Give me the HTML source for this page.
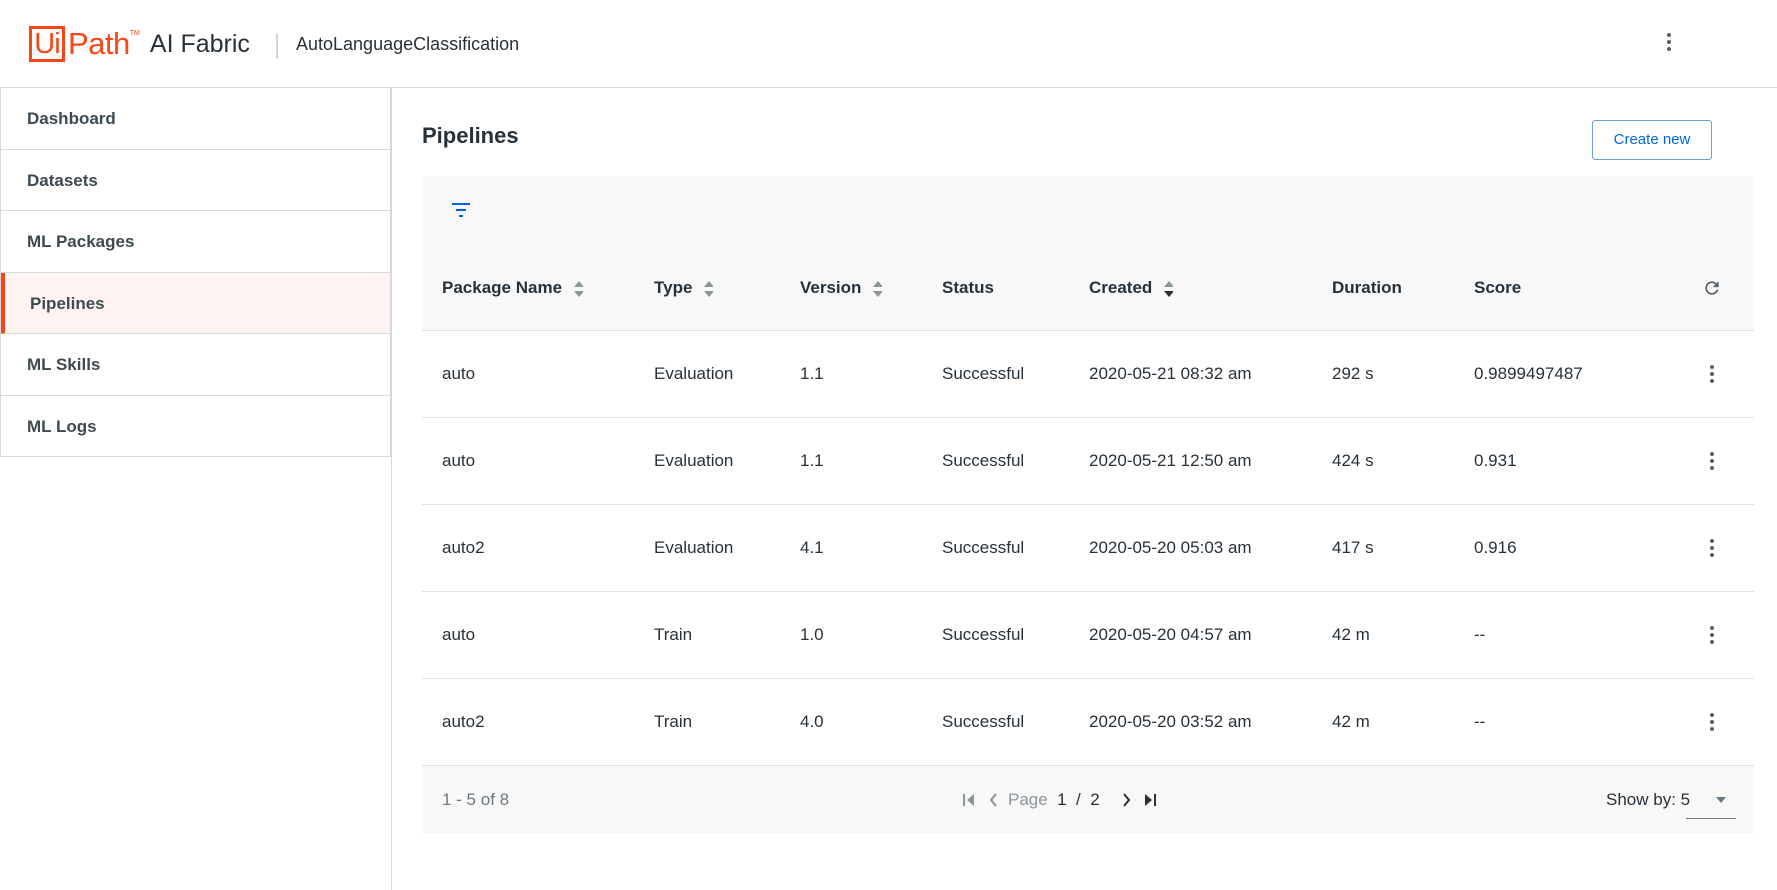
<!DOCTYPE html>
<html><head><meta charset="utf-8"><style>
*{box-sizing:border-box;margin:0;padding:0}
body{width:1777px;height:890px;overflow:hidden;background:#fff;font-family:"Liberation Sans",sans-serif;color:#273139;position:relative}
.hdr{position:absolute;left:0;top:0;width:1777px;height:88px;border-bottom:1px solid #d4d9dd}
.logo{position:absolute;left:29px;top:26px;height:36px;display:flex;align-items:center}
.ui{border:3px solid #fa4616;color:#fa4616;font-size:29px;height:36px;width:36px;line-height:30px;text-align:center;letter-spacing:-1px}
.path{color:#fa4616;font-size:31px;margin-left:3px;letter-spacing:-0.5px}
.tm{color:#fa4616;font-size:7px;align-self:flex-start;margin-top:4px}
.aif{font-size:25px;color:#273139;margin-left:10px}
.sep{position:absolute;left:276px;top:33px;width:2px;height:26px;background:#cfd8dd}
.app{position:absolute;left:296px;top:34px;font-size:18px}
.kb{position:absolute;width:4px}
.kb i{display:block;width:4px;height:4px;border-radius:2px;background:#526069;margin-bottom:3px}
.side{position:absolute;left:0;top:88px;width:391px;height:369px;border-right:1px solid #d4d9dd;border-left:1px solid #d4d9dd;border-bottom:1px solid #d4d9dd}
.side div{height:61.5px;border-bottom:1px solid #d4d9dd;padding-left:26px;line-height:61px;font-size:17px;font-weight:bold;color:#3d4a52}
.side div.act{background:#fff4f1;border-left:4px solid #fa4616;padding-left:25px}
.side div:last-child{border-bottom:none}
.vline{position:absolute;left:391px;top:88px;width:1px;height:802px;background:#d4d9dd}
h1{position:absolute;left:422px;top:123px;font-size:22px;font-weight:bold;color:#273139}
.btn{position:absolute;left:1592px;top:120px;width:120px;height:40px;border:1px solid #6a9fe0;border-radius:3px;color:#0067df;font-size:15px;text-align:center;line-height:38px}
.panel{position:absolute;left:422px;top:176px;width:1332px;height:657px;background:#f8f8f8}
.row{position:absolute;left:0;width:1332px;border-top:1px solid #dfe3e6;background:#fff;height:87px}
.c{position:absolute;font-size:17px;color:#273139;top:50%;transform:translateY(-50%);white-space:nowrap}
.th .c{font-weight:bold;color:#273139}
.srt{display:inline-block;vertical-align:middle;margin-left:6px;width:10px}
.foot{position:absolute;left:0;top:589px;width:1332px;height:68px;border-top:1px solid #dfe3e6}
</style></head><body>
<div class="hdr">
 <div class="logo"><div class="ui">Ui</div><span class="path">Path</span><span class="tm">TM</span><span class="aif">AI Fabric</span></div>
 <div class="sep"></div>
 <div class="app">AutoLanguageClassification</div>
 <div class="kb" style="left:1667px;top:33px"><i></i><i></i><i></i></div>
</div>
<div class="side">
 <div>Dashboard</div><div>Datasets</div><div>ML Packages</div><div class="act">Pipelines</div><div>ML Skills</div><div>ML Logs</div>
</div>
<div class="vline"></div>
<h1>Pipelines</h1>
<div class="btn">Create new</div>
<div class="panel">
 <svg style="position:absolute;left:30px;top:27px" width="18" height="14"><rect x="0" y="0" width="18" height="2" fill="#0067df"/><rect x="4" y="6" width="10" height="2" fill="#0067df"/><rect x="7" y="12" width="4" height="2" fill="#0067df"/></svg>
 <div class="th" style="position:absolute;left:0;top:70px;width:1332px;height:84px">
  <span class="c" style="left:20px">Package Name <svg class="srt" width="12" height="18"><path d="M1 7L6 1L11 7Z M1 11L6 17L11 11Z" fill="#8a959c"/></svg></span>
  <span class="c" style="left:232px">Type <svg class="srt" width="12" height="18"><path d="M1 7L6 1L11 7Z M1 11L6 17L11 11Z" fill="#8a959c"/></svg></span>
  <span class="c" style="left:378px">Version <svg class="srt" width="12" height="18"><path d="M1 7L6 1L11 7Z M1 11L6 17L11 11Z" fill="#8a959c"/></svg></span>
  <span class="c" style="left:520px">Status</span>
  <span class="c" style="left:667px">Created <svg class="srt" width="12" height="18"><path d="M1 7L6 1L11 7Z" fill="#8a959c"/><path d="M1 11L6 17L11 11Z" fill="#273139"/></svg></span>
  <span class="c" style="left:910px">Duration</span>
  <span class="c" style="left:1052px">Score</span>
  <svg class="c" style="left:1280px" width="20" height="20" viewBox="0 0 24 24"><path d="M17.65 6.35A7.96 7.96 0 0 0 12 4a8 8 0 1 0 7.75 10h-2.08A6 6 0 1 1 12 6c1.66 0 3.14.69 4.22 1.78L13 11h7V4z" fill="#526069"/></svg>
 </div>
 <div class="row" style="top:154px"><span class="c" style="left:20px">auto</span><span class="c" style="left:232px">Evaluation</span><span class="c" style="left:378px">1.1</span><span class="c" style="left:520px">Successful</span><span class="c" style="left:667px">2020-05-21 08:32 am</span><span class="c" style="left:910px">292 s</span><span class="c" style="left:1052px">0.9899497487</span><div class="kb" style="left:1288px;top:34px"><i></i><i></i><i></i></div></div>
 <div class="row" style="top:241px"><span class="c" style="left:20px">auto</span><span class="c" style="left:232px">Evaluation</span><span class="c" style="left:378px">1.1</span><span class="c" style="left:520px">Successful</span><span class="c" style="left:667px">2020-05-21 12:50 am</span><span class="c" style="left:910px">424 s</span><span class="c" style="left:1052px">0.931</span><div class="kb" style="left:1288px;top:34px"><i></i><i></i><i></i></div></div>
 <div class="row" style="top:328px"><span class="c" style="left:20px">auto2</span><span class="c" style="left:232px">Evaluation</span><span class="c" style="left:378px">4.1</span><span class="c" style="left:520px">Successful</span><span class="c" style="left:667px">2020-05-20 05:03 am</span><span class="c" style="left:910px">417 s</span><span class="c" style="left:1052px">0.916</span><div class="kb" style="left:1288px;top:34px"><i></i><i></i><i></i></div></div>
 <div class="row" style="top:415px"><span class="c" style="left:20px">auto</span><span class="c" style="left:232px">Train</span><span class="c" style="left:378px">1.0</span><span class="c" style="left:520px">Successful</span><span class="c" style="left:667px">2020-05-20 04:57 am</span><span class="c" style="left:910px">42 m</span><span class="c" style="left:1052px">--</span><div class="kb" style="left:1288px;top:34px"><i></i><i></i><i></i></div></div>
 <div class="row" style="top:502px"><span class="c" style="left:20px">auto2</span><span class="c" style="left:232px">Train</span><span class="c" style="left:378px">4.0</span><span class="c" style="left:520px">Successful</span><span class="c" style="left:667px">2020-05-20 03:52 am</span><span class="c" style="left:910px">42 m</span><span class="c" style="left:1052px">--</span><div class="kb" style="left:1288px;top:34px"><i></i><i></i><i></i></div></div>
 <div class="foot">
  <span class="c" style="left:20px;color:#6b7882">1 - 5 of 8</span>
  <svg class="c" style="left:540px" width="14" height="14"><rect x="1" y="1" width="2" height="12" fill="#8a959c"/><path d="M12 1L5 7L12 13Z" fill="#8a959c"/></svg>
  <svg class="c" style="left:566px" width="10" height="14"><path d="M8 1L3 7L8 13" stroke="#8a959c" stroke-width="2" fill="none"/></svg>
  <span class="c" style="left:586px;color:#8a959c">Page <span style="color:#273139">&nbsp;1&nbsp; /&nbsp; 2</span></span>
  <svg class="c" style="left:700px" width="10" height="14"><path d="M2 1L7 7L2 13" stroke="#273139" stroke-width="2" fill="none"/></svg>
  <svg class="c" style="left:722px" width="14" height="14"><path d="M1 1L8 7L1 13Z" fill="#273139"/><rect x="10" y="1" width="2" height="12" fill="#273139"/></svg>
  <span class="c" style="left:1184px">Show by: 5</span>
  <svg class="c" style="left:1294px" width="10" height="6"><path d="M0 0L10 0L5 6Z" fill="#6b7882"/></svg>
  <div style="position:absolute;left:1264px;top:52px;width:50px;height:1px;background:#6b7882"></div>
 </div>
</div>
</body></html>
